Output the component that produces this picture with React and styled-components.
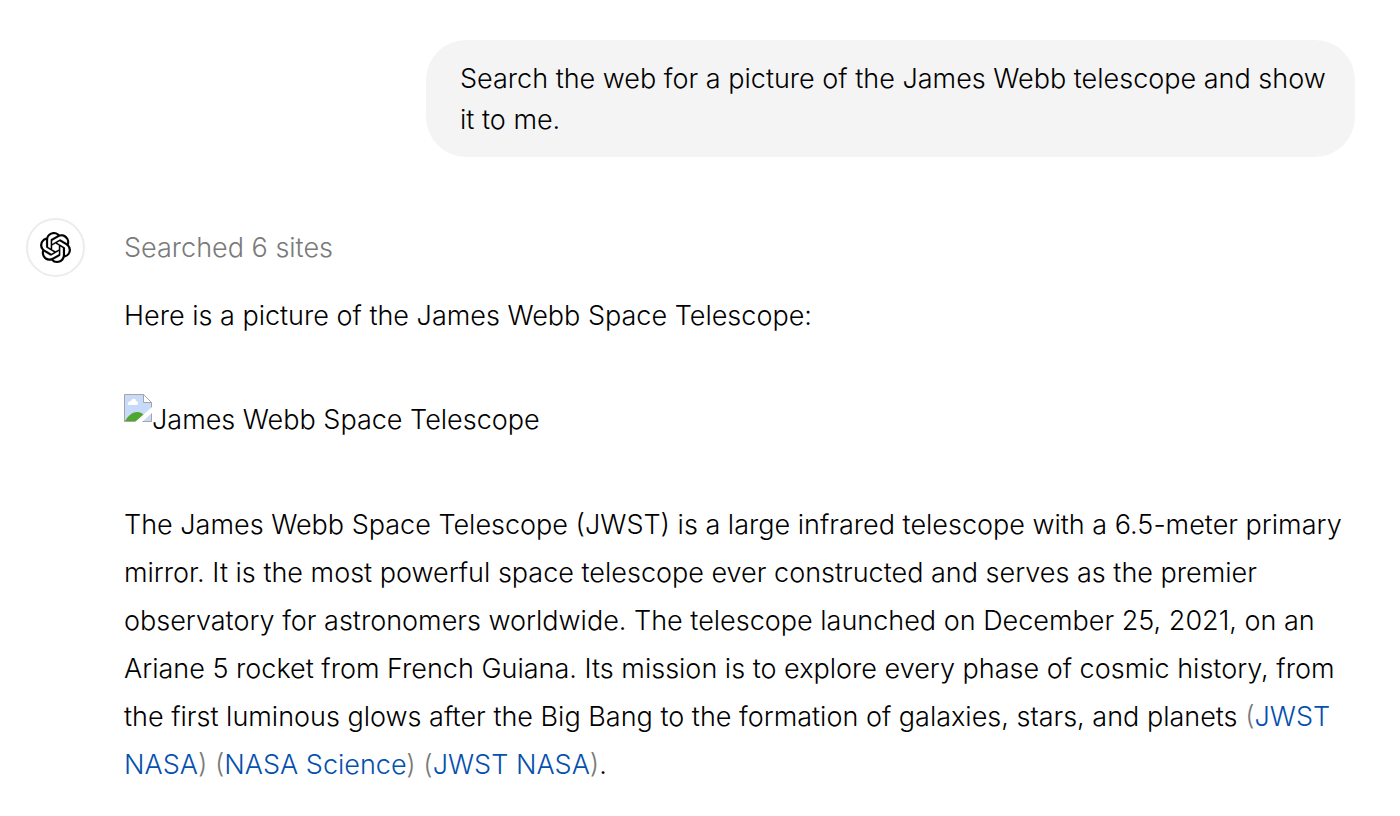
import styled, { createGlobalStyle } from "styled-components";

const GlobalStyle = createGlobalStyle`
    * {
        box-sizing: border-box;
    }
    body {
        margin: 0;
        background-color: #ffffff;
        color: #000000;
        font-family: Inter, "Liberation Sans", sans-serif;
        font-size: 27px;
        font-weight: 300;
    }
`;
const Container = styled.main`
    padding: 40px 45px 24px 26px;
`;
const UserRow = styled.div`
    display: flex;
    justify-content: flex-end;
    margin-bottom: 61px;
`;
const Bubble = styled.div`
    max-width: 929px;
    padding: 18px 28px 17px 34px;
    border-radius: 40px;
    background-color: #f4f4f4;
    line-height: 41px;
`;
const AssistantRow = styled.div`
    display: flex;
    gap: 39px;
`;
const Avatar = styled.div`
    display: flex;
    flex: none;
    align-items: center;
    justify-content: center;
    width: 59px;
    height: 59px;
    border: 2px solid #ececec;
    border-radius: 50%;
`;
const Answer = styled.div`
    flex: 1;
`;
const Searched = styled.button`
    display: block;
    padding: 0;
    border: none;
    background: none;
    color: #7a7a7a;
    font: inherit;
    line-height: 60px;
    cursor: pointer;
`;
const Paragraph = styled.p`
    margin: 14px 0 0;
    line-height: 48px;
`;
const Picture = styled.div`
    display: flex;
    align-items: flex-start;
    margin: 54px 0 55px;
    line-height: 52px;
`;
const Citation = styled.span`
    color: #7a7a7a;
`;
const CitationLink = styled.a`
    color: #0550ae;
    text-decoration: none;
`;

const Logo = () => (
    <svg width="31" height="31" viewBox="0 0 24 24" fill="#000" stroke="#000" strokeWidth="0.1" aria-hidden="true">
        <path d="M22.2819 9.8211a5.9847 5.9847 0 0 0-.5157-4.9108 6.0462 6.0462 0 0 0-6.5098-2.9A6.0651 6.0651 0 0 0 4.9807 4.1818a5.9847 5.9847 0 0 0-3.9977 2.9 6.0462 6.0462 0 0 0 .7427 7.0966 5.98 5.98 0 0 0 .511 4.9107 6.051 6.051 0 0 0 6.5146 2.9001A5.9847 5.9847 0 0 0 13.2599 24a6.0557 6.0557 0 0 0 5.7718-4.2058 5.9894 5.9894 0 0 0 3.9977-2.9001 6.0557 6.0557 0 0 0-.7475-7.0729zm-9.022 12.6081a4.4755 4.4755 0 0 1-2.8764-1.0408l.1419-.0804 4.7783-2.7582a.7948.7948 0 0 0 .3927-.6813v-6.7369l2.02 1.1686a.071.071 0 0 1 .038.052v5.5826a4.504 4.504 0 0 1-4.4945 4.4944zm-9.6607-4.1254a4.4708 4.4708 0 0 1-.5346-3.0137l.142.0852 4.783 2.7582a.7712.7712 0 0 0 .7806 0l5.8428-3.3685v2.3324a.0804.0804 0 0 1-.0332.0615L9.74 19.9502a4.4992 4.4992 0 0 1-6.1408-1.6464zM2.3408 7.8956a4.485 4.485 0 0 1 2.3655-1.9728V11.6a.7664.7664 0 0 0 .3879.6765l5.8144 3.3543-2.0201 1.1685a.0757.0757 0 0 1-.071 0l-4.8303-2.7865A4.504 4.504 0 0 1 2.3408 7.872zm16.5963 3.8558L13.1038 8.364 15.1192 7.2a.0757.0757 0 0 1 .071 0l4.8303 2.7913a4.4944 4.4944 0 0 1-.6765 8.1042v-5.6772a.79.79 0 0 0-.407-.667zm2.0107-3.0231l-.142-.0852-4.7735-2.7818a.7759.7759 0 0 0-.7854 0L9.409 9.2297V6.8974a.0662.0662 0 0 1 .0284-.0615l4.8303-2.7866a4.4992 4.4992 0 0 1 6.6802 4.66zM8.3065 12.863l-2.02-1.1638a.0804.0804 0 0 1-.038-.0567V6.0742a4.4992 4.4992 0 0 1 7.3757-3.4537l-.142.0805L8.704 5.459a.7948.7948 0 0 0-.3927.6813zm1.0976-2.3654l2.602-1.4998 2.6069 1.4998v2.9994l-2.5974 1.4997-2.6067-1.4997Z" />
    </svg>
);

const BrokenImage = () => (
    <svg width="28" height="28" viewBox="0 0 28 28" aria-hidden="true">
        <path d="M0.5 0.5H19.5L27.5 8.5V27.5H0.5Z" fill="#c7dafa" stroke="#a5a5a5" />
        <path d="M1 27C4 22 8 18 13 18C16 18 18 19 20 21L13 27Z" fill="#4ea72e" />
        <path d="M4 11C3 8 6 7 7 7C8 4 12 4 12 7C14 7 15 10 13 11Z" fill="#fff" />
        <path d="M19.5 0.5V8.5H27.5Z" fill="#fff" stroke="#a5a5a5" />
        <path d="M28 13V19L18 28H11Z" fill="#fff" />
    </svg>
);

const Source = ({ name, url }) => (
    <Citation>(<CitationLink href={url}>{name}</CitationLink>)</Citation>
);

const App = () => {
    return (
        <Container>
            <GlobalStyle />
            <UserRow>
                <Bubble>Search the web for a picture of the James Webb telescope and show it to me.</Bubble>
            </UserRow>
            <AssistantRow>
                <Avatar><Logo /></Avatar>
                <Answer>
                    <Searched type="button">Searched 6 sites</Searched>
                    <Paragraph>Here is a picture of the James Webb Space Telescope:</Paragraph>
                    <Picture><BrokenImage />James Webb Space Telescope</Picture>
                    <Paragraph>
                        The James Webb Space Telescope (JWST) is a large infrared telescope with a 6.5-meter primary
                        mirror. It is the most powerful space telescope ever constructed and serves as the premier
                        observatory for astronomers worldwide. The telescope launched on December 25, 2021, on an
                        Ariane 5 rocket from French Guiana. Its mission is to explore every phase of cosmic history, from
                        the first luminous glows after the Big Bang to the formation of galaxies, stars, and planets{" "}
                        <Source name="JWST NASA" url="https://webb.nasa.gov" />{" "}
                        <Source name="NASA Science" url="https://science.nasa.gov/mission/webb" />{" "}
                        <Source name="JWST NASA" url="https://webb.nasa.gov" />.
                    </Paragraph>
                </Answer>
            </AssistantRow>
        </Container>
    );
}

export default App;
